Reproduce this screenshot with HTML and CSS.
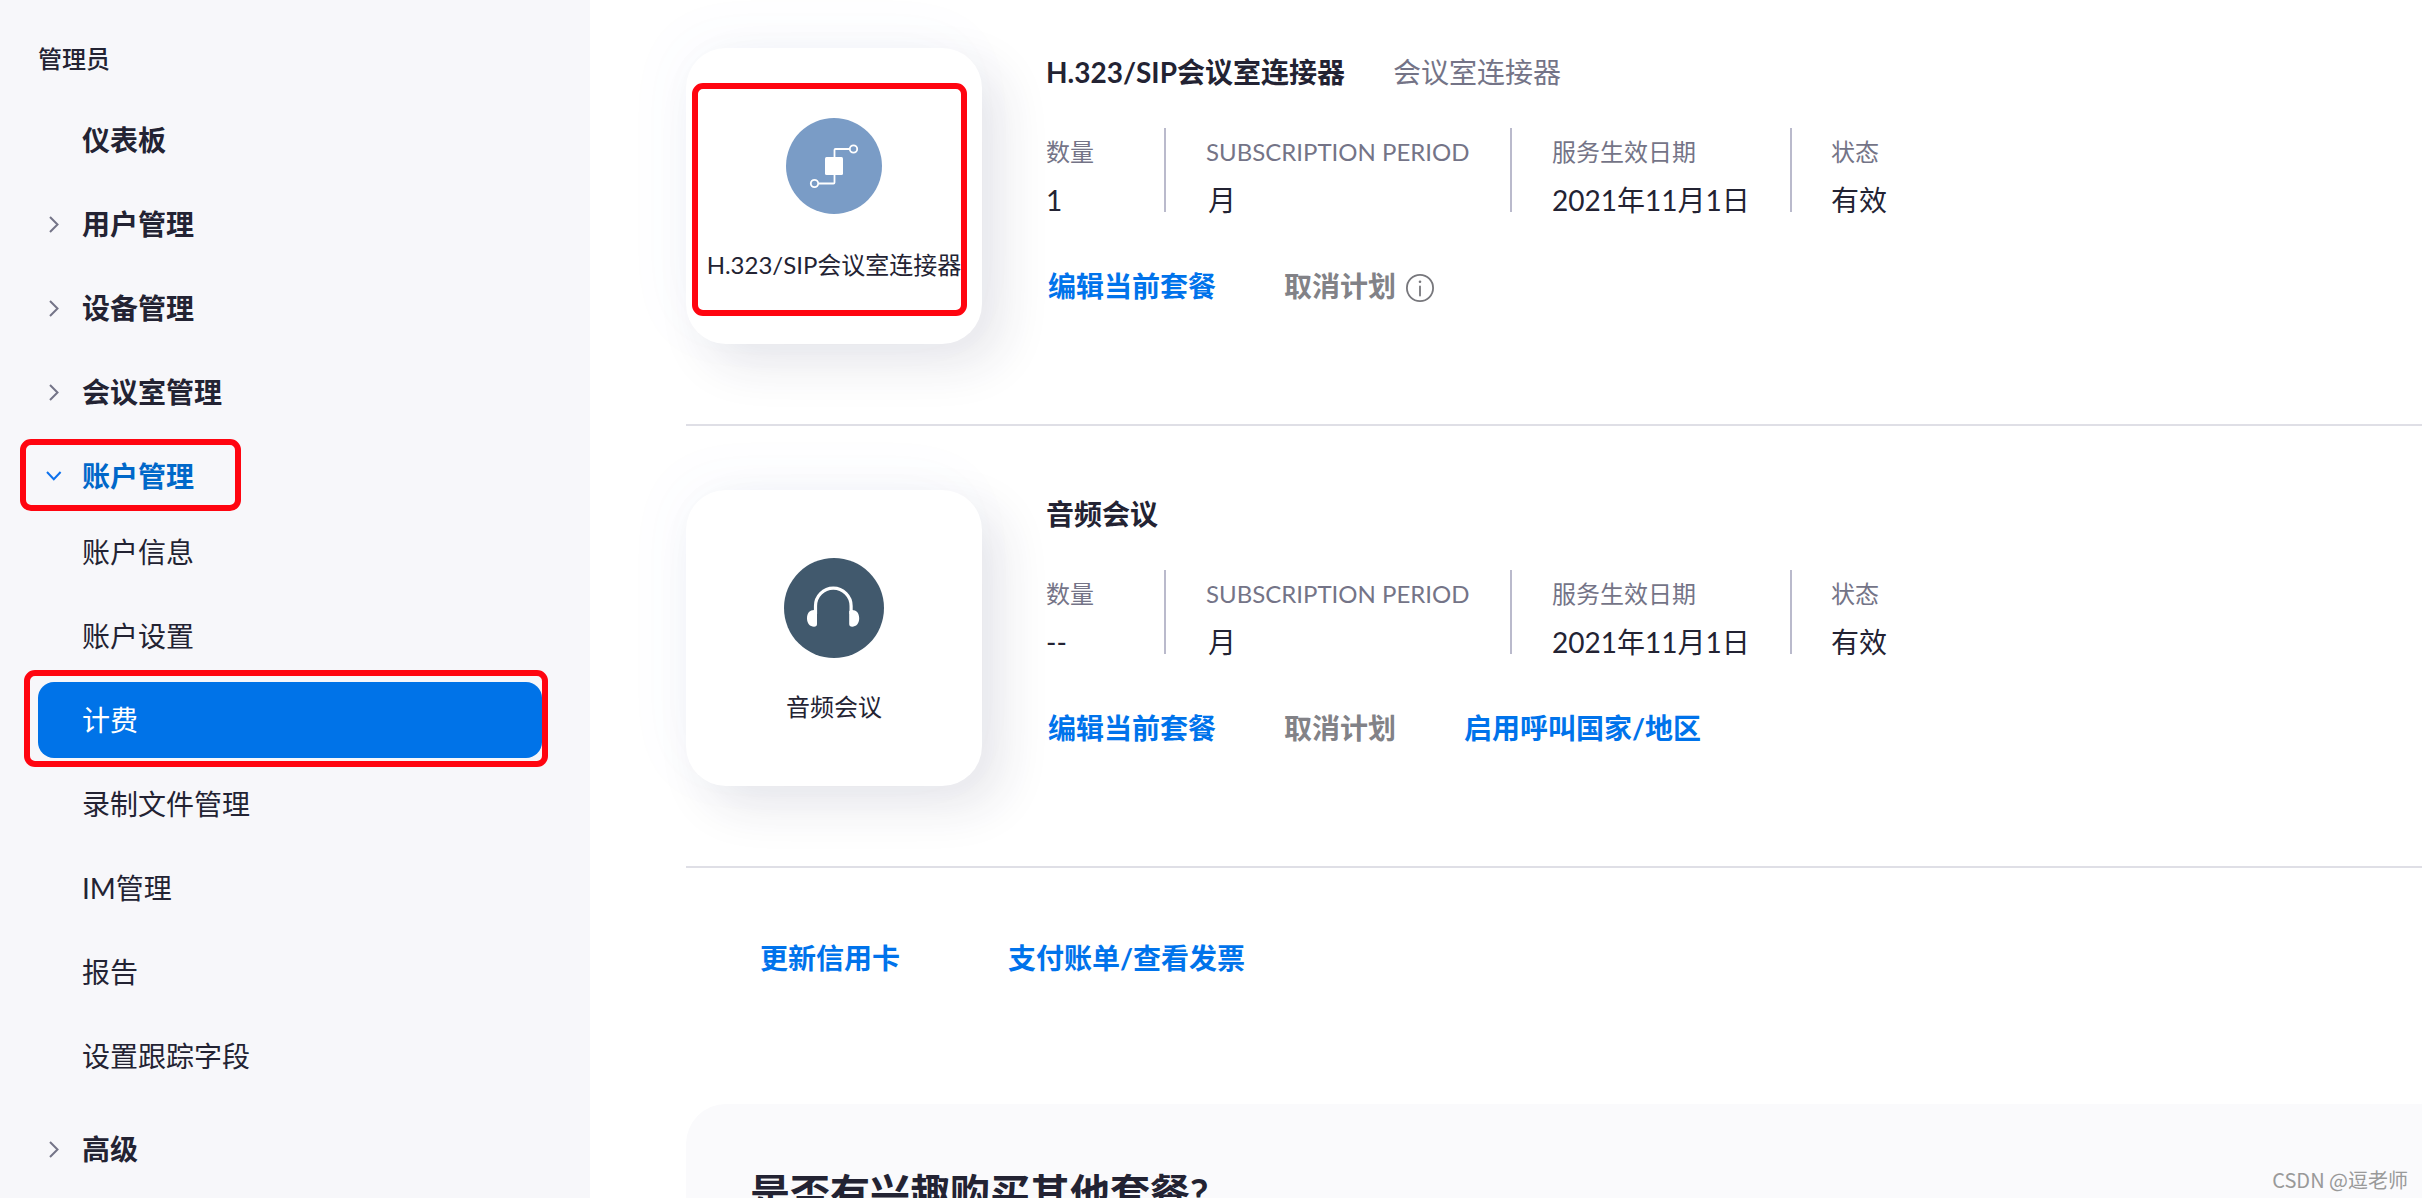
FILE: index.html
```html
<!DOCTYPE html>
<html lang="zh-CN">
<head>
    <meta charset="UTF-8">
    <title>计费</title>
    <link rel="stylesheet" href="styles.css">
</head>
<body>
    <div class="page">
        <nav class="sidebar">
            <div class="sidebar-title">管理员</div>
            <ul class="menu">
                <li><a class="menu-item">仪表板</a></li>
                <li><a class="menu-item"><svg class="arrow" viewBox="0 0 16 20"><path d="M4 3l7.500 7.500-7.500 7.500"/></svg>用户管理</a></li>
                <li><a class="menu-item"><svg class="arrow" viewBox="0 0 16 20"><path d="M4 3l7.500 7.500-7.500 7.500"/></svg>设备管理</a></li>
                <li><a class="menu-item"><svg class="arrow" viewBox="0 0 16 20"><path d="M4 3l7.500 7.500-7.500 7.500"/></svg>会议室管理</a></li>
                <li>
                    <a class="menu-item open"><svg class="arrow" viewBox="0 0 16 20"><path d="M1 6l6.800 7.300 6.800-7.300"/></svg>账户管理<span class="mark mark-account"></span></a>
                    <ul class="submenu">
                        <li><a class="menu-item">账户信息</a></li>
                        <li><a class="menu-item">账户设置</a></li>
                        <li><a class="menu-item active">计费<span class="mark mark-billing"></span></a></li>
                        <li><a class="menu-item">录制文件管理</a></li>
                        <li><a class="menu-item">IM管理</a></li>
                        <li><a class="menu-item">报告</a></li>
                        <li><a class="menu-item">设置跟踪字段</a></li>
                    </ul>
                </li>
                <li><a class="menu-item"><svg class="arrow" viewBox="0 0 16 20"><path d="M4 3l7.500 7.500-7.500 7.500"/></svg>高级</a></li>
            </ul>
        </nav>

        <main class="content">
            <section class="plan">
                <div class="card">
                    <div class="card-icon">
                        <svg width="96" height="96" viewBox="0 0 96 96">
                            <circle cx="48" cy="48" r="48" fill="#7a9cc6"/>
                            <rect x="39" y="39" width="18" height="18" rx="1.5" fill="#fff"/>
                            <g fill="none" stroke="#fff" stroke-width="1.8">
                                <path d="M48.5 39v-7q0-1 1-1h14M48.5 57v7.500q0 1-1 1h-15"/>
                                <circle cx="67.500" cy="31" r="3.700"/>
                                <circle cx="28.500" cy="65.500" r="3.700"/>
                            </g>
                        </svg>
                    </div>
                    <div class="card-name">H.323/SIP会议室连接器</div>
                    <span class="mark mark-card"></span>
                </div>
                <div class="info">
                    <div class="info-title"><h3>H.323/SIP会议室连接器</h3><span>会议室连接器</span></div>
                    <div class="fields">
                        <div class="field count"><label>数量</label><p>1</p></div>
                        <div class="field period"><label>SUBSCRIPTION PERIOD</label><p>月</p></div>
                        <div class="field date"><label>服务生效日期</label><p>2021年11月1日</p></div>
                        <div class="field status"><label>状态</label><p>有效</p></div>
                    </div>
                    <div class="actions">
                        <a class="link">编辑当前套餐</a>
                        <a class="link disabled">取消计划<svg class="tip" viewBox="0 0 28 28"><circle cx="14" cy="14" r="13.100"/><path d="M14 12.500v9"/><circle class="dot" cx="14" cy="7.800" r="1.300"/></svg></a>
                    </div>
                </div>
            </section>

            <section class="plan">
                <div class="card">
                    <div class="card-icon">
                        <svg width="100" height="100" viewBox="0 0 100 100">
                            <circle cx="50" cy="50" r="50" fill="#41596d"/>
                            <path d="M31.500 56v-8a17.800 17.800 0 0 1 35.600 0v8" fill="none" stroke="#fff" stroke-width="3.200"/>
                            <path d="M33 53v13q0 2.700-3 2.700c-4 0-7-3-7-8.400s3-8.300 7-8.300zM65.200 53v13q0 2.700 3 2.700c4 0 7-3 7-8.400s-3-8.300-7-8.300z" fill="#fff"/>
                        </svg>
                    </div>
                    <div class="card-name">音频会议</div>
                </div>
                <div class="info">
                    <div class="info-title"><h3>音频会议</h3></div>
                    <div class="fields">
                        <div class="field count"><label>数量</label><p>--</p></div>
                        <div class="field period"><label>SUBSCRIPTION PERIOD</label><p>月</p></div>
                        <div class="field date"><label>服务生效日期</label><p>2021年11月1日</p></div>
                        <div class="field status"><label>状态</label><p>有效</p></div>
                    </div>
                    <div class="actions">
                        <a class="link">编辑当前套餐</a>
                        <a class="link disabled">取消计划</a>
                        <a class="link">启用呼叫国家/地区</a>
                    </div>
                </div>
            </section>

            <div class="billing-links">
                <a class="link">更新信用卡</a>
                <a class="link">支付账单/查看发票</a>
            </div>

            <section class="more">
                <h2>是否有兴趣购买其他套餐?</h2>
            </section>
        </main>
    </div>
    <div class="watermark">CSDN @逗老师</div>
</body>
</html>
```

FILE: styles.css
```css
* {
    box-sizing: border-box;
}
body {
    margin: 0;
    font-family: Lato, "Noto Sans CJK SC", sans-serif;
    font-size: 28px;
    line-height: 40px;
    color: #232333;
    background-color: #fff;
    overflow: hidden;
}
h2, h3, p, ul {
    margin: 0;
    padding: 0;
}
ul {
    list-style: none;
}
.page {
    display: flex;
    height: 1198px;
    overflow: hidden;
}

/* 左侧菜单 */
.sidebar {
    flex: none;
    width: 590px;
    padding: 39px 48px 0 38px;
    background-color: #f7f7fa;
}
.sidebar-title {
    height: 63px;
    font-size: 24px;
    font-weight: 500;
}
.menu > li {
    margin-bottom: 8px;
}
.menu-item {
    position: relative;
    display: flex;
    align-items: center;
    height: 76px;
    padding-left: 44px;
    border-radius: 16px;
    font-weight: bold;
}
.submenu {
    padding-bottom: 9px;
}
.submenu li + li {
    margin-top: 8px;
}
.submenu .menu-item {
    font-weight: normal;
}
.menu-item.open {
    color: #0068c9;
}
.submenu .menu-item.active {
    color: #fff;
    background-color: #0073e8;
}
.arrow {
    width: 16px;
    height: 20px;
    margin: 0 20px 0 -36px;
    fill: none;
    stroke: #747487;
    stroke-width: 2;
}
.open .arrow {
    stroke: #0e72ed;
}

/* 红色标注框 */
.mark {
    position: absolute;
    border: 6px solid #ff0510;
    border-radius: 11px;
}
.mark-account {
    left: -18px;
    top: 1px;
    width: 221px;
    height: 72px;
}
.mark-billing {
    left: -14px;
    top: -12px;
    width: 524px;
    height: 97px;
}
.mark-card {
    left: 6px;
    top: 35px;
    width: 275px;
    height: 233px;
}

/* 套餐 */
.content {
    flex: 1;
    padding: 48px 0 0 96px;
}
.plan {
    display: flex;
    height: 378px;
    margin-bottom: 64px;
    border-bottom: 2px solid #dfdfe6;
}
.card {
    position: relative;
    width: 296px;
    height: 296px;
    padding-top: 68px;
    border-radius: 40px;
    background-color: #fff;
    box-shadow: 20px 20px 50px rgba(35, 40, 75, 0.11), -12px -12px 60px rgba(80, 110, 230, 0.035);
    text-align: center;
}
.card-icon {
    display: flex;
    align-items: center;
    justify-content: center;
    height: 100px;
}
.card-name {
    margin-top: 29px;
    font-size: 24px;
    white-space: nowrap;
}
.info {
    padding: 4px 0 0 64px;
}
.info-title {
    display: flex;
    gap: 48px;
    color: #747487;
}
.info-title h3 {
    font-size: 28px;
    color: #232333;
}
.fields {
    display: flex;
    height: 84px;
    margin-top: 36px;
}
.field {
    padding-left: 40px;
}
.field + .field {
    border-left: 2px solid #babacc;
}
.field label {
    display: block;
    height: 52px;
    padding-top: 4px;
    font-size: 24px;
    color: #747487;
}
.count {
    width: 118px;
    padding-left: 0;
}
.period {
    width: 346px;
}
.period p {
    padding-left: 2px;
}
.date {
    width: 280px;
}
.field.status {
    padding-left: 39px;
}
.actions {
    display: flex;
    gap: 68px;
    margin: 54px 0 0 2px;
}
.link {
    display: flex;
    align-items: center;
    font-weight: bold;
    color: #0073eb;
}
.link.disabled {
    color: #828287;
}
.tip {
    width: 28px;
    height: 28px;
    margin: 4px 0 0 10px;
    fill: none;
    stroke: #77777c;
    stroke-width: 1.8;
    stroke-linecap: round;
}
.tip .dot {
    fill: #77777c;
    stroke: none;
}
.billing-links {
    display: flex;
    gap: 108px;
    margin-top: 70px;
    padding-left: 74px;
}
.more {
    height: 220px;
    margin-top: 126px;
    padding: 61px 0 0 64px;
    border-radius: 40px 0 0 40px;
    background-color: #fafafc;
}
.more h2 {
    font-size: 40px;
    line-height: 56px;
}
.watermark {
    position: absolute;
    right: 14px;
    bottom: 5px;
    font-family: "Noto Sans CJK SC", sans-serif;
    font-size: 20px;
    line-height: 26px;
    color: #999;
}
```
